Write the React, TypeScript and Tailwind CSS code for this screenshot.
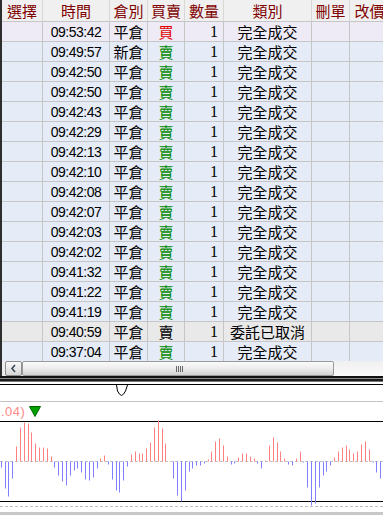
import React from "react";

type Order = {
    time: string;
    pos: string;
    side: string;
    qty: number;
    kind: string;
    tone: "first" | "normal" | "cancel";
};

const ORDERS: Order[] = [
    { time: "09:53:42", pos: "平倉", side: "買", qty: 1, kind: "完全成交", tone: "first" },
    { time: "09:49:57", pos: "新倉", side: "賣", qty: 1, kind: "完全成交", tone: "normal" },
    { time: "09:42:50", pos: "平倉", side: "賣", qty: 1, kind: "完全成交", tone: "normal" },
    { time: "09:42:50", pos: "平倉", side: "賣", qty: 1, kind: "完全成交", tone: "normal" },
    { time: "09:42:43", pos: "平倉", side: "賣", qty: 1, kind: "完全成交", tone: "normal" },
    { time: "09:42:29", pos: "平倉", side: "賣", qty: 1, kind: "完全成交", tone: "normal" },
    { time: "09:42:13", pos: "平倉", side: "賣", qty: 1, kind: "完全成交", tone: "normal" },
    { time: "09:42:10", pos: "平倉", side: "賣", qty: 1, kind: "完全成交", tone: "normal" },
    { time: "09:42:08", pos: "平倉", side: "賣", qty: 1, kind: "完全成交", tone: "normal" },
    { time: "09:42:07", pos: "平倉", side: "賣", qty: 1, kind: "完全成交", tone: "normal" },
    { time: "09:42:03", pos: "平倉", side: "賣", qty: 1, kind: "完全成交", tone: "normal" },
    { time: "09:42:02", pos: "平倉", side: "賣", qty: 1, kind: "完全成交", tone: "normal" },
    { time: "09:41:32", pos: "平倉", side: "賣", qty: 1, kind: "完全成交", tone: "normal" },
    { time: "09:41:22", pos: "平倉", side: "賣", qty: 1, kind: "完全成交", tone: "normal" },
    { time: "09:41:19", pos: "平倉", side: "賣", qty: 1, kind: "完全成交", tone: "normal" },
    { time: "09:40:59", pos: "平倉", side: "賣", qty: 1, kind: "委託已取消", tone: "cancel" },
    { time: "09:37:04", pos: "平倉", side: "賣", qty: 1, kind: "完全成交", tone: "normal" },
];

// [x, value] value > 0 draws up (red), < 0 draws down (blue)
const BARS: [number, number][] = [
    [1, -6], [5, -27], [8, -35], [12, -17], [16, 15], [20, 34], [24, 39], [28, 38],
    [31, 29], [35, 18], [39, 14], [43, 14], [47, 13], [51, 5], [54, -6], [58, -14],
    [62, -20], [66, -24], [70, -14], [74, -9], [77, -7], [81, -11], [85, -18], [89, -19],
    [93, -16], [97, -7], [100, 3], [104, 6], [108, -3], [112, -18], [116, -29], [119, -31],
    [123, -19], [127, -5], [131, 7], [135, 10], [139, 8], [142, 8], [146, 13], [150, 19],
    [154, 34], [158, 41], [162, 33], [165, 18], [173, -17], [177, -34], [181, -40],
    [185, -29], [189, -10], [192, -7], [196, -4], [200, -4], [204, -2], [208, 2], [211, 10],
    [215, 20], [219, 23], [223, 16], [227, 5], [231, -3], [234, -2], [238, 4], [242, 8],
    [246, 8], [250, 5], [254, 3], [257, -2], [261, -7], [265, 1], [269, 16], [273, 24],
    [277, 19], [280, 10], [284, 3], [288, -3], [292, -4], [296, 3], [300, 10], [303, -1],
    [307, -26], [311, -44], [315, -42], [319, -26], [323, -14], [326, -10], [330, -4],
    [334, 4], [338, 10], [342, 14], [346, 16], [349, 12], [353, 8], [357, 10], [361, 17],
    [365, 20], [369, 12], [373, -1], [376, -11], [380, -17],
];

const COLS = [
    { title: "選擇", w: "w-[41px]" },
    { title: "時間", w: "w-[67px]" },
    { title: "倉別", w: "w-[38px]" },
    { title: "買賣", w: "w-[37px]" },
    { title: "數量", w: "w-[39px]" },
    { title: "類別", w: "w-[88px]" },
    { title: "刪單", w: "w-[38px]" },
    { title: "改價", w: "w-[40px]" },
];

const cjk = "font-['Noto_Sans_CJK_TC','Noto_Sans_CJK_SC',sans-serif]";
const cell = "shrink-0 h-full border-r border-[#c6c6c6] flex items-center overflow-hidden whitespace-nowrap";

function OrderRow({ o }: { o: Order }) {
    const bg =
        o.tone === "first" ? "bg-[#efebf6]" : o.tone === "cancel" ? "bg-[#e9e9e9]" : "bg-[#e5ecf8]";
    const sideColor =
        o.tone === "cancel" ? "text-black" : o.side === "買" ? "text-[#e00000]" : "text-[#008a00]";
    return (
        <div className={`flex h-[20px] border-b border-[#c6c6c6] ${bg} text-[15px] leading-none text-black`}>
            <div className={`${cell} w-[41px]`} />
            <div className={`${cell} w-[67px] justify-center font-['Liberation_Sans',sans-serif] text-[14px] tracking-[-0.5px]`}>
                {o.time}
            </div>
            <div className={`${cell} w-[38px] justify-center ${cjk}`}>{o.pos}</div>
            <div className={`${cell} w-[37px] justify-center ${cjk} ${sideColor}`}>{o.side}</div>
            <div className={`${cell} w-[39px] justify-end pr-[5px] font-['Liberation_Serif',serif] text-[16px]`}>
                {o.qty}
            </div>
            <div className={`${cell} w-[88px] justify-center ${cjk}`}>{o.kind}</div>
            <div className={`${cell} w-[38px]`} />
            <div className={`${cell} w-[40px]`} />
        </div>
    );
}

function HScrollBar() {
    return (
        <div className="flex h-[15px] bg-[#ececec] pl-[3px] items-stretch">
            <div className="w-[17px] shrink-0 rounded-[2px] border border-[#8e8e8e] bg-gradient-to-b from-[#fafafa] to-[#d6d6d6] flex items-center justify-center">
                <svg width="7" height="9" viewBox="0 0 7 9">
                    <path d="M5 1 L2 4.5 L5 8" stroke="#3a4a5a" strokeWidth="1.6" fill="none" />
                </svg>
            </div>
            <div className="w-[312px] shrink-0 rounded-[2px] border border-[#9a9a9a] bg-gradient-to-b from-[#fbfbfb] via-[#ececec] to-[#d2d2d2] flex items-center">
                <div className="ml-[153px] flex gap-[1px]">
                    <div className="w-px h-[6px] bg-[#666]" />
                    <div className="w-px h-[6px] bg-[#666]" />
                    <div className="w-px h-[6px] bg-[#666]" />
                    <div className="w-px h-[6px] bg-[#666]" />
                </div>
            </div>
            <div className="flex-1 bg-gradient-to-b from-[#f0f0f0] to-[#fafafa]" />
        </div>
    );
}

function Histogram() {
    const base = 39;
    return (
        <svg width="383" height="78" viewBox="0 0 383 78" className="block overflow-visible">
            <line x1="0" y1={base + 0.5} x2="383" y2={base + 0.5} stroke="#c0c0c0" strokeDasharray="3 2" />
            {BARS.map(([x, v], i) => (
                <line
                    key={i}
                    x1={x + 0.5}
                    x2={x + 0.5}
                    y1={base + 0.5}
                    y2={base + 0.5 - v}
                    stroke={v > 0 ? "#ff8080" : "#8080ff"}
                    strokeWidth="1"
                />
            ))}
        </svg>
    );
}

export default function App() {
    return (
        <div className="w-[383px] h-[515px] overflow-hidden bg-white select-none">
            {/* order grid */}
            <div className="border-l-2 border-[#2e2e2e]">
                <div className="h-[361px] overflow-hidden">
                    <div className={`flex h-[22px] border-b border-[#c6c6c6] bg-[#f0f0f0] text-[15px] leading-none text-[#800000] ${cjk}`}>
                        {COLS.map((c) => (
                            <div key={c.title} className={`${cell} ${c.w} justify-center border-[#d8d8d8]`}>
                                {c.title}
                            </div>
                        ))}
                    </div>
                    {ORDERS.map((o, i) => (
                        <OrderRow key={i} o={o} />
                    ))}
                </div>
                <HScrollBar />
            </div>

            {/* window frame */}
            <div className="h-[2px] bg-[#111]" />
            <div className="h-px bg-[#8a8a8a]" />
            <div className="h-[2px] bg-[#1a1a1a]" />
            <div className="h-px bg-[#777]" />
            <div className="h-[2px] bg-white" />
            <div className="h-px bg-black" />

            {/* chart head with cursor mark */}
            <div className="h-[16px] bg-white">
                <svg width="383" height="16" viewBox="0 0 383 16" className="block">
                    <path d="M116.5 0 L117.5 6 Q119.5 10 121.5 10.5 Q123.5 10 125.5 6 L127.5 0" stroke="#000" fill="none" strokeWidth="1" />
                </svg>
            </div>
            <div className="h-px bg-[#c4c4c4]" />

            {/* indicator legend */}
            <div className="h-[19px] flex items-center gap-[4px] pl-[1px]">
                <span className="font-['Liberation_Sans',sans-serif] text-[13px] text-[#ff8a8a] tracking-[0.5px]">.04)</span>
                <svg width="12" height="11" viewBox="0 0 12 11">
                    <path d="M0.5 0.5 L11.5 0.5 L6 10.5 Z" fill="#00a000" stroke="#006a00" strokeWidth="1" />
                </svg>
            </div>

            {/* histogram panel */}
            <div className="border-y border-black h-[81px]">
                <Histogram />
            </div>
            <div className="h-[4px]" />
            <div className="h-px border-t border-dashed border-[#c0c0c0]" />
            <div className="h-[5px]" />
            <div className="h-[3px] bg-[#c8c8c8]" />
        </div>
    );
}
